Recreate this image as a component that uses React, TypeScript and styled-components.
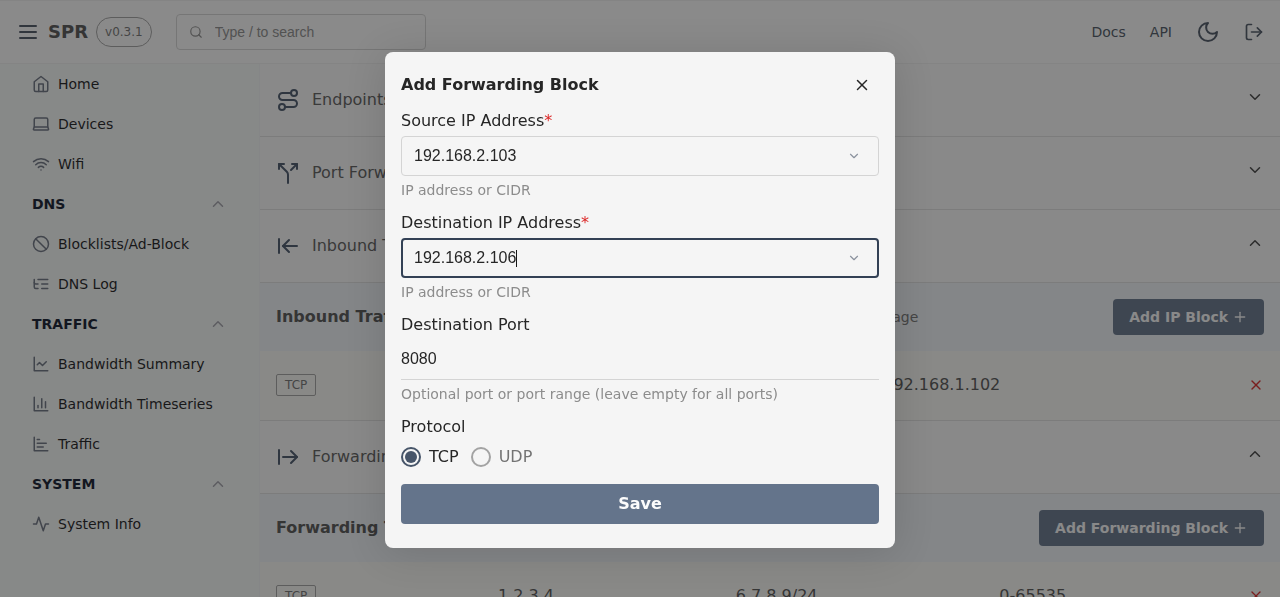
import React, { useState } from "react";
import styled, { createGlobalStyle } from "styled-components";

const GlobalStyle = createGlobalStyle`
  *, *::before, *::after { box-sizing: border-box; }
  body {
    margin: 0;
    font-family: "DejaVu Sans", sans-serif;
    font-size: 16px;
    line-height: 24px;
    color: #262626;
    background: #fafafa;
  }
  button, input { font: inherit; color: inherit; margin: 0; }
  button { border: 0; padding: 0; background: none; cursor: pointer; }
  ul { list-style: none; margin: 0; padding: 0; }
  h1, h2, h3, p { margin: 0; font-size: inherit; }
  a { color: inherit; text-decoration: none; }
  svg { display: block; flex: none; }
`;

/* ---------- icons ---------- */

const ICONS = {
  menu: ["M4 6h16", "M4 12h16", "M4 18h16"],
  search: ["M19 11a8 8 0 1 1-16 0 8 8 0 0 1 16 0Z", "m21 21-4.3-4.3"],
  moon: ["M12 3a6 6 0 0 0 9 9 9 9 0 1 1-9-9Z"],
  logout: ["M9 21H5a2 2 0 0 1-2-2V5a2 2 0 0 1 2-2h4", "m16 17 5-5-5-5", "M21 12H9"],
  home: ["m3 9 9-7 9 7v11a2 2 0 0 1-2 2H5a2 2 0 0 1-2-2z", "M9 22V12h6v10"],
  laptop: [
    "M5 4h14a2 2 0 0 1 2 2v10H3V6a2 2 0 0 1 2-2Z",
    "M3 16l-1 2.500a1 1 0 0 0 1 1.500h18a1 1 0 0 0 1-1.500L21 16",
  ],
  wifi: ["M5 13a10 10 0 0 1 14 0", "M8.500 16.500a5 5 0 0 1 7 0", "M2 8.820a15 15 0 0 1 20 0", "M12 20h.01"],
  ban: ["M22 12a10 10 0 1 1-20 0 10 10 0 0 1 20 0Z", "m4.900 4.900 14.200 14.200"],
  listTree: ["M21 12h-8", "M21 6H8", "M21 18h-8", "M3 6v4c0 1.100.9 2 2 2h3", "M3 10v6c0 1.100.9 2 2 2h3"],
  lineChart: ["M3 3v18h18", "m19 9-5 5-4-4-3 3"],
  barChart: ["M3 3v18h18", "M18 17V9", "M13 17V5", "M8 17v-3"],
  barChartHorizontal: ["M3 3v18h18", "M7 16h8", "M7 11h12", "M7 6h3"],
  activity: ["M22 12h-4l-3 9L9 3l-3 9H2"],
  route: [
    "M9 19a3 3 0 1 1-6 0 3 3 0 0 1 6 0Z",
    "M9 19h8.500a3.500 3.500 0 0 0 0-7h-11a3.500 3.500 0 0 1 0-7H15",
    "M21 5a3 3 0 1 1-6 0 3 3 0 0 1 6 0Z",
  ],
  split: ["M16 3h5v5", "M8 3H3v5", "M12 22v-8.300a4 4 0 0 0-1.172-2.872L3 3", "m15 9 6-6"],
  arrowLeft: ["M3 19V5", "m13 6-6 6 6 6", "M7 12h14"],
  arrowRight: ["M3 5v14", "M21 12H7", "m15 18 6-6-6-6"],
  chevronDown: ["m6 9 6 6 6-6"],
  chevronUp: ["m18 15-6-6-6 6"],
  plus: ["M5 12h14", "M12 5v14"],
  close: ["M18 6 6 18", "m6 6 12 12"],
};

type IconName = keyof typeof ICONS;

const Icon = ({ name, size = 18 }: { name: IconName; size?: number }) => (
  <svg
    width={size}
    height={size}
    viewBox="0 0 24 24"
    fill="none"
    stroke="currentColor"
    strokeWidth="2"
    strokeLinecap="round"
    strokeLinejoin="round"
    aria-hidden="true"
  >
    {ICONS[name].map((d) => (
      <path key={d} d={d} />
    ))}
  </svg>
);

/* ---------- page frame ---------- */

const Page = styled.div`
  display: flex;
  flex-direction: column;
  height: 100vh;
  overflow: hidden;
`;

const TopBar = styled.header`
  display: flex;
  align-items: center;
  flex: none;
  height: 64px;
  padding: 0 16px;
  background: #fdfdfd;
  border: solid #f0f0f0;
  border-width: 1px 0;
  color: #4b5563;
`;

const Brand = styled.h1`
  margin: 0 8px;
  font-size: 18px;
  color: #525252;
`;

const Version = styled.span`
  padding: 2px 8px;
  border: 1px solid #a3a3a3;
  border-radius: 16px;
  font-size: 12px;
  color: #737373;
`;

const Search = styled.label`
  display: flex;
  align-items: center;
  gap: 12px;
  width: 250px;
  height: 36px;
  margin-left: 24px;
  padding: 0 12px;
  border: 1px solid #d4d4d4;
  border-radius: 4px;
  color: #8c8c8c;
`;

const SearchInput = styled.input`
  flex: 1;
  min-width: 0;
  padding: 0;
  border: 0;
  outline: 0;
  background: none;
  font-family: "Liberation Sans", sans-serif;
  font-size: 14px;
  &::placeholder { color: #8c8c8c; opacity: 1; }
`;

const TopLinks = styled.nav`
  display: flex;
  align-items: center;
  gap: 24px;
  margin-left: auto;
  font-size: 14px;
`;

const Body = styled.div`
  display: flex;
  flex: 1;
  min-height: 0;
`;

/* ---------- sidebar ---------- */

const Sidebar = styled.nav`
  flex: none;
  width: 260px;
  padding: 0 32px;
  background: #f7faf8;
  border-right: 1px solid #f3f4f6;
  font-size: 14px;
`;

const NavLink = styled.a`
  display: flex;
  align-items: center;
  gap: 8px;
  height: 40px;
  color: #18181b;
  svg { color: #6b7280; }
`;

const NavHeading = styled.button`
  display: flex;
  align-items: center;
  justify-content: space-between;
  width: 100%;
  height: 40px;
  font-weight: bold;
  color: #0f172a;
  svg { color: #a1a1aa; }
`;

type NavEntry = { icon: IconName; label: string };

const NAV: { title?: string; items: NavEntry[] }[] = [
  {
    items: [
      { icon: "home", label: "Home" },
      { icon: "laptop", label: "Devices" },
      { icon: "wifi", label: "Wifi" },
    ],
  },
  {
    title: "DNS",
    items: [
      { icon: "ban", label: "Blocklists/Ad-Block" },
      { icon: "listTree", label: "DNS Log" },
    ],
  },
  {
    title: "TRAFFIC",
    items: [
      { icon: "lineChart", label: "Bandwidth Summary" },
      { icon: "barChart", label: "Bandwidth Timeseries" },
      { icon: "barChartHorizontal", label: "Traffic" },
    ],
  },
  { title: "SYSTEM", items: [{ icon: "activity", label: "System Info" }] },
];

/* ---------- firewall sections ---------- */

const Content = styled.main`
  flex: 1;
  min-width: 0;
  overflow: hidden;
  color: #525252;
`;

const SectionToggle = styled.button`
  display: flex;
  align-items: flex-start;
  gap: 12px;
  width: 100%;
  padding: 24px 16px;
  border-bottom: 1px solid #e0e0e0;
  text-align: left;
  color: #404040;
  svg:first-child { color: #475569; }
`;

const SectionName = styled.span`
  flex: 1;
  color: #5c5c5c;
`;

const BlockBar = styled.div`
  display: flex;
  align-items: center;
  justify-content: space-between;
  padding: 16px;
  background: #f1f5f9;
`;

const BlockTitle = styled.h2`
  font-weight: bold;
`;

const BlockNote = styled.p`
  font-size: 14px;
  color: #737373;
`;

const AddButton = styled.button`
  display: flex;
  align-items: center;
  gap: 4px;
  height: 36px;
  padding: 0 16px;
  border-radius: 4px;
  background: #64748b;
  color: #fafafa;
  font-size: 14px;
  font-weight: bold;
`;

const RuleRow = styled.li`
  display: flex;
  align-items: center;
  justify-content: space-between;
  height: 70px;
  padding: 0 16px 1px;
  background: #fafaf7;
  border-bottom: 1px solid #e0e0e0;
`;

const Tag = styled.span`
  padding: 0 8px;
  border: 1px solid #a3a3a3;
  border-radius: 2px;
  font-size: 12px;
  line-height: 20px;
  color: #737373;
`;

const DeleteButton = styled.button`
  color: #dc2626;
`;

type BlockGroup = { title: string; note: string; action: string; protocol: string; cells: string[] };

const SECTIONS: { icon: IconName; name: string; block?: BlockGroup }[] = [
  { icon: "route", name: "Endpoints" },
  { icon: "split", name: "Port Forwarding" },
  {
    icon: "arrowLeft",
    name: "Inbound Traffic Block",
    block: {
      title: "Inbound Traffic Block",
      note: "Blocks IP traffic at the inbound stage",
      action: "Add IP Block",
      protocol: "TCP",
      cells: ["1.2.3.4/8", "192.168.1.102"],
    },
  },
  {
    icon: "arrowRight",
    name: "Forwarding Traffic Block",
    block: {
      title: "Forwarding Traffic Block",
      note: "Block forwarded traffic",
      action: "Add Forwarding Block",
      protocol: "TCP",
      cells: ["1.2.3.4", "6.7.8.9/24", "0-65535"],
    },
  },
];

const Block = ({ title, note, action, protocol, cells }: BlockGroup) => (
  <>
    <BlockBar>
      <BlockTitle>{title}</BlockTitle>
      <BlockNote>{note}</BlockNote>
      <AddButton type="button">
        {action}
        <Icon name="plus" size={16} />
      </AddButton>
    </BlockBar>
    <ul>
      <RuleRow>
        <Tag>{protocol}</Tag>
        {cells.map((cell) => (
          <span key={cell}>{cell}</span>
        ))}
        <DeleteButton type="button" aria-label="Delete rule">
          <Icon name="close" size={16} />
        </DeleteButton>
      </RuleRow>
    </ul>
  </>
);

/* ---------- dialog ---------- */

const Backdrop = styled.div`
  position: fixed;
  inset: 0;
  display: flex;
  align-items: flex-start;
  justify-content: center;
  padding: 52px 16px 16px;
  background: rgba(23, 23, 23, 0.5);
`;

const Dialog = styled.form`
  display: flex;
  flex-direction: column;
  gap: 10px;
  width: 100%;
  max-width: 510px;
  padding: 20px 16px 24px;
  border-radius: 8px;
  background: #f5f5f5;
  box-shadow: 0 4px 40px rgba(0, 0, 0, 0.14);
`;

const DialogHeader = styled.div`
  display: flex;
  align-items: center;
  justify-content: space-between;
  padding-right: 8px;
  line-height: 26px;
`;

const DialogTitle = styled.h2`
  font-weight: bold;
`;

const Field = styled.div`
  display: flex;
  flex-direction: column;
`;

const FieldLabel = styled.label`
  margin-bottom: 2px;
  line-height: 26px;
`;

const Required = styled.span`
  color: #dc2626;
`;

const InputBox = styled.div<{ $focused?: boolean; $underlined?: boolean }>`
  display: flex;
  align-items: center;
  height: 40px;
  padding: ${(p) => (p.$underlined ? "0 0 1px" : p.$focused ? "0 16px 0 11px" : "0 17px 0 12px")};
  border-style: solid;
  border-color: ${(p) => (p.$focused ? "#334155" : "#d4d4d4")};
  border-width: ${(p) => (p.$underlined ? "0 0 1px" : p.$focused ? "2px" : "1px")};
  border-radius: ${(p) => (p.$underlined ? "0" : "4px")};
  font-family: "Liberation Sans", sans-serif;
`;

const TextInput = styled.input`
  field-sizing: content;
  min-width: 0;
  height: 24px;
  padding: 0;
  border: 0;
  outline: 0;
  background: none;
`;

const Caret = styled.span`
  width: 1px;
  height: 17px;
  background: #171717;
`;

const OpenButton = styled.button`
  margin-left: auto;
  color: #8b929e;
`;

const Help = styled.p`
  margin-top: 4px;
  font-size: 14px;
  line-height: 20px;
  color: #8c8c8c;
`;

const RadioRow = styled.div`
  display: flex;
  align-items: center;
  gap: 12px;
  height: 30px;
`;

const RadioLabel = styled.label<{ $checked: boolean }>`
  display: flex;
  align-items: center;
  gap: 8px;
  color: ${(p) => (p.$checked ? "#262626" : "#737373")};
`;

const Radio = styled.input`
  appearance: none;
  width: 20px;
  height: 20px;
  padding: 2px;
  border: 2px solid #a3a3a3;
  border-radius: 50%;
  &:checked {
    border-color: #475569;
    background: #475569 content-box;
  }
`;

const SaveButton = styled.button`
  height: 40px;
  margin-top: 2px;
  border-radius: 4px;
  background: #64748b;
  color: #fcfcfc;
  font-weight: bold;
`;

type AddressFieldProps = { id: string; label: string; initial: string; focused?: boolean };

const AddressField = ({ id, label, initial, focused }: AddressFieldProps) => {
  const [value, setValue] = useState(initial);
  return (
    <Field>
      <FieldLabel htmlFor={id}>
        {label}
        <Required>*</Required>
      </FieldLabel>
      <InputBox $focused={focused}>
        <TextInput id={id} type="text" required value={value} onChange={(e) => setValue(e.target.value)} />
        {focused && <Caret />}
        <OpenButton type="button" aria-label="Choose an address">
          <Icon name="chevronDown" size={14} />
        </OpenButton>
      </InputBox>
      <Help>IP address or CIDR</Help>
    </Field>
  );
};

const AddForwardingBlock = () => {
  const [port, setPort] = useState("8080");
  const [protocol, setProtocol] = useState("TCP");
  return (
    <Backdrop>
      <Dialog role="dialog" aria-modal="true" aria-labelledby="dialog-title" onSubmit={(e) => e.preventDefault()}>
        <DialogHeader>
          <DialogTitle id="dialog-title">Add Forwarding Block</DialogTitle>
          <button type="button" aria-label="Close">
            <Icon name="close" size={18} />
          </button>
        </DialogHeader>
        <AddressField id="source" label="Source IP Address" initial="192.168.2.103" />
        <AddressField id="destination" label="Destination IP Address" initial="192.168.2.106" focused />
        <Field>
          <FieldLabel htmlFor="port">Destination Port</FieldLabel>
          <InputBox $underlined>
            <TextInput id="port" type="text" value={port} onChange={(e) => setPort(e.target.value)} />
          </InputBox>
          <Help>Optional port or port range (leave empty for all ports)</Help>
        </Field>
        <Field role="radiogroup" aria-labelledby="protocol-label">
          <FieldLabel as="span" id="protocol-label">
            Protocol
          </FieldLabel>
          <RadioRow>
            {["TCP", "UDP"].map((name) => (
              <RadioLabel key={name} $checked={protocol === name}>
                <Radio
                  type="radio"
                  name="protocol"
                  value={name}
                  checked={protocol === name}
                  onChange={() => setProtocol(name)}
                />
                {name}
              </RadioLabel>
            ))}
          </RadioRow>
        </Field>
        <SaveButton type="submit">Save</SaveButton>
      </Dialog>
    </Backdrop>
  );
};

export default function App() {
  return (
    <>
      <GlobalStyle />
      <Page>
        <TopBar>
          <button type="button" aria-label="Menu">
            <Icon name="menu" size={24} />
          </button>
          <Brand>SPR</Brand>
          <Version>v0.3.1</Version>
          <Search>
            <Icon name="search" size={14} />
            <SearchInput type="text" placeholder="Type / to search" aria-label="Search" />
          </Search>
          <TopLinks>
            <a href="#docs">Docs</a>
            <a href="#api">API</a>
            <button type="button" aria-label="Dark mode">
              <Icon name="moon" size={24} />
            </button>
            <button type="button" aria-label="Log out">
              <Icon name="logout" size={20} />
            </button>
          </TopLinks>
        </TopBar>
        <Body>
          <Sidebar>
            {NAV.map(({ title, items }) => (
              <div key={title ?? "main"}>
                {title && (
                  <NavHeading type="button">
                    {title}
                    <Icon name="chevronUp" />
                  </NavHeading>
                )}
                {items.map(({ icon, label }) => (
                  <NavLink key={label} href="#">
                    <Icon name={icon} />
                    {label}
                  </NavLink>
                ))}
              </div>
            ))}
          </Sidebar>
          <Content>
            {SECTIONS.map(({ icon, name, block }) => (
              <section key={name}>
                <SectionToggle type="button" aria-expanded={!!block}>
                  <Icon name={icon} size={24} />
                  <SectionName>{name}</SectionName>
                  <Icon name={block ? "chevronUp" : "chevronDown"} />
                </SectionToggle>
                {block && <Block {...block} />}
              </section>
            ))}
          </Content>
        </Body>
      </Page>
      <AddForwardingBlock />
    </>
  );
}
